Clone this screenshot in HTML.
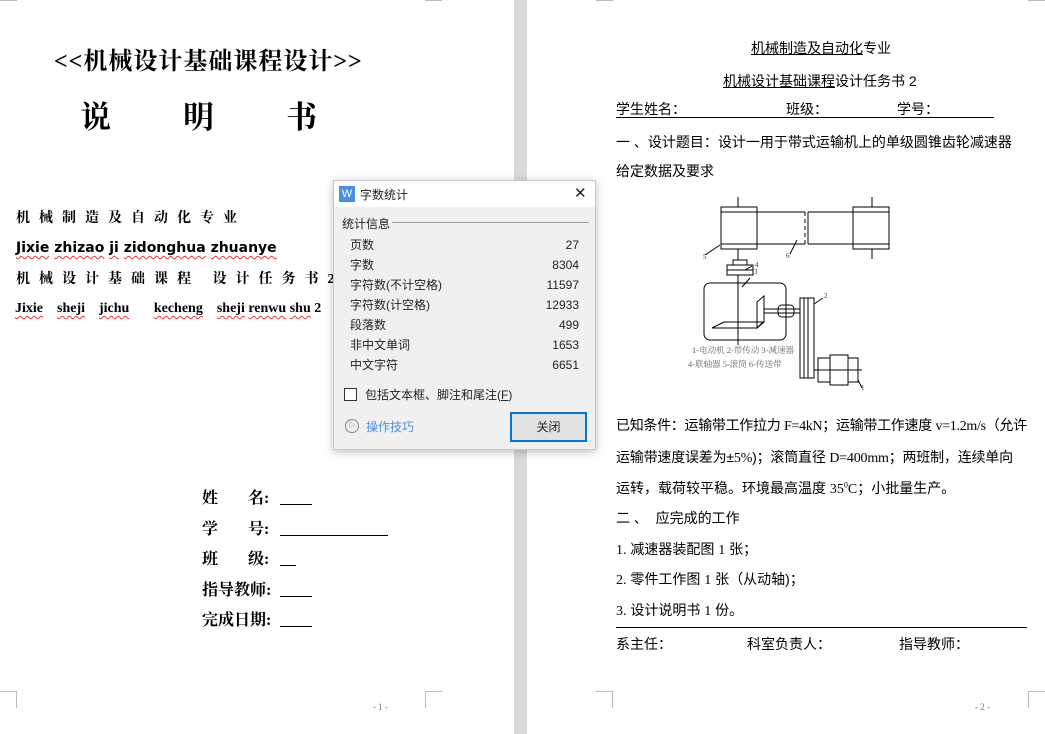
<!DOCTYPE html>
<html><head><meta charset="utf-8"><style>
*{margin:0;padding:0;box-sizing:border-box}
body{width:1045px;height:734px;overflow:hidden;background:#fff;position:relative;font-family:"Liberation Sans","Noto Sans CJK SC",sans-serif;color:#000}
.a{position:absolute;white-space:nowrap}
.s{font-family:"Liberation Serif","Noto Serif CJK SC",serif}
.w{text-decoration:underline wavy #e33 1px;text-underline-offset:3px}
.r{font-size:14px;line-height:18px}
.c{position:absolute;border-color:#bbb;border-style:solid;width:17px;height:17px}
.lb{display:inline-block;width:78px}
</style></head><body>
<div class="a" style="left:514px;top:0;width:13px;height:734px;background:#d8d9db"></div>

<div class="a s" style="left:54px;top:41px;font-size:24px;font-weight:bold;letter-spacing:1px">&lt;&lt;机械设计基础课程设计&gt;&gt;</div>
<div class="a s" style="left:80px;top:92px;font-size:31px;font-weight:bold">说<span style="display:inline-block;width:72px"></span>明<span style="display:inline-block;width:72px"></span>书</div>
<div class="a s" style="left:16px;top:207px;font-size:14px;font-weight:bold;letter-spacing:9px">机械制造及自动化专业</div>
<div class="a" style="left:16px;top:240px;font-size:14px;font-weight:bold;font-family:'DejaVu Sans',sans-serif"><span class="w">Jixie</span> <span class="w">zhizao</span> <span class="w">ji</span> <span class="w">zidonghua</span> <span class="w">zhuanye</span></div>
<div class="a s" style="left:16px;top:268px;font-size:14px;font-weight:bold;letter-spacing:9px">机械设计基础课程 设计任务书2</div>
<div class="a s" style="left:15px;top:301px;font-size:14px;font-weight:bold"><span class="w">Jixie</span>&nbsp;&nbsp;&nbsp; <span class="w">sheji</span>&nbsp;&nbsp;&nbsp; <span class="w">jichu</span>&nbsp;&nbsp;&nbsp;&nbsp;&nbsp;&nbsp; <span class="w">kecheng</span>&nbsp;&nbsp;&nbsp; <span class="w">sheji</span> <span class="w">renwu</span> <span class="w">shu</span> 2</div>
<div class="a s" style="left:202px;top:484px;font-size:16px;font-weight:bold;line-height:30.5px">
<span class="lb">姓<span style="display:inline-block;width:30px"></span>名:</span><u>&nbsp;&nbsp;&nbsp;&nbsp;&nbsp;&nbsp;&nbsp;&nbsp;</u><br>
<span class="lb">学<span style="display:inline-block;width:30px"></span>号:</span><u>&nbsp;&nbsp;&nbsp;&nbsp;&nbsp;&nbsp;&nbsp;&nbsp;&nbsp;&nbsp;&nbsp;&nbsp;&nbsp;&nbsp;&nbsp;&nbsp;&nbsp;&nbsp;&nbsp;&nbsp;&nbsp;&nbsp;&nbsp;&nbsp;&nbsp;&nbsp;&nbsp;</u><br>
<span class="lb">班<span style="display:inline-block;width:30px"></span>级:</span><u>&nbsp;&nbsp;&nbsp;&nbsp;</u><br>
<span class="lb">指导教师:</span><u>&nbsp;&nbsp;&nbsp;&nbsp;&nbsp;&nbsp;&nbsp;&nbsp;</u><br>
<span class="lb">完成日期:</span><u>&nbsp;&nbsp;&nbsp;&nbsp;&nbsp;&nbsp;&nbsp;&nbsp;</u></div>
<div class="a s" style="left:373px;top:702px;font-size:9px;color:#777">- 1 -</div>
<div class="c" style="left:425px;top:691px;border-width:1px 0 0 1px"></div>
<div class="c" style="left:0;top:-16px;border-width:0 1px 1px 0"></div>
<div class="c" style="left:425px;top:-16px;border-width:0 0 1px 1px"></div>
<div class="c" style="left:0;top:691px;border-width:1px 1px 0 0"></div>

<div class="c" style="left:596px;top:691px;border-width:1px 1px 0 0"></div>
<div class="c" style="left:1028px;top:691px;border-width:1px 0 0 1px"></div>
<div class="c" style="left:596px;top:-16px;border-width:0 1px 1px 0"></div>
<div class="c" style="left:1028px;top:-16px;border-width:0 0 1px 1px"></div>
<div class="a r" style="left:751px;top:39px"><u>机械制造及自动化</u>专业</div>
<div class="a r" style="left:723px;top:72px"><u>机械设计基础课程</u>设计任务书 2</div>
<div class="a r" style="left:616px;top:100px">学生姓名：</div>
<div class="a r" style="left:786px;top:100px">班级：</div>
<div class="a r" style="left:897px;top:100px">学号：</div>
<div class="a" style="left:616px;top:117px;width:378px;border-top:1px solid #000"></div>
<div class="a r" style="left:616px;top:133px">一 、设计题目：设计一用于带式运输机上的单级圆锥齿轮减速器</div>
<div class="a r" style="left:616px;top:162px">给定数据及要求</div>
<svg class="a" style="left:680px;top:190px" width="220" height="200" viewBox="680 190 220 200" fill="none" stroke="#000" stroke-width="1">
<rect x="721" y="207" width="36" height="42"/><line x1="721" y1="212" x2="757" y2="212"/><line x1="721" y1="244" x2="757" y2="244"/>
<line x1="757" y1="212" x2="805" y2="212"/><line x1="757" y1="244" x2="805" y2="244"/>
<line x1="805" y1="212" x2="805" y2="244" stroke-dasharray="4,3"/><line x1="808" y1="212" x2="808" y2="244"/>
<line x1="808" y1="212" x2="853" y2="212"/><line x1="808" y1="244" x2="853" y2="244"/>
<rect x="853" y="207" width="36" height="42"/><line x1="853" y1="212" x2="889" y2="212"/><line x1="853" y1="244" x2="889" y2="244"/>
<line x1="738" y1="197" x2="738" y2="207"/><line x1="872" y1="197" x2="872" y2="207"/><line x1="872" y1="249" x2="872" y2="259"/>
<line x1="738" y1="249" x2="738" y2="260"/>
<rect x="733" y="260" width="14" height="5"/><rect x="727" y="265" width="26" height="10"/><line x1="727" y1="270" x2="753" y2="270"/>
<rect x="704" y="283" width="82" height="57" rx="6"/>
<line x1="738" y1="275" x2="738" y2="345"/>
<path d="M712 328 L724 322 L763 322 L757 328 Z"/><path d="M757 302 L764 296 L764 322 L757 328 Z"/>
<line x1="764" y1="309" x2="800" y2="309"/><line x1="764" y1="313" x2="800" y2="313"/>
<rect x="778" y="305" width="16" height="12" rx="4"/>
<rect x="800" y="298" width="14" height="80"/><line x1="804" y1="298" x2="804" y2="378"/><line x1="808" y1="298" x2="808" y2="378"/>
<rect x="818" y="358" width="12" height="24"/><rect x="830" y="355" width="18" height="30"/><rect x="848" y="358" width="10" height="24"/>
<line x1="814" y1="370" x2="862" y2="370"/>
<line x1="705" y1="255" x2="720" y2="245"/><line x1="790" y1="254" x2="797" y2="240"/><line x1="814" y1="304" x2="823" y2="298"/><line x1="745" y1="270" x2="752" y2="266"/><line x1="742" y1="287" x2="750" y2="278"/><line x1="858" y1="380" x2="862" y2="388"/>
<g fill="#333" stroke="none" font-size="7" font-family="Liberation Serif, Noto Serif CJK SC, serif"><text x="703" y="259">5</text><text x="786" y="258">6</text><text x="755" y="267">4</text><text x="754" y="274">3</text><text x="824" y="298">2</text><text x="861" y="390">1</text>
<text x="692" y="353" fill="#666" font-size="8.5">1-电动机 2-带传动 3-减速器</text><text x="688" y="367" fill="#666" font-size="8.5">4-联轴器 5-滚筒 6-传送带</text></g>
</svg>
<div class="a r" style="left:616px;top:416px;letter-spacing:-0.3px">已知条件：运输带工作拉力 <span class="s">F=4kN</span>；运输带工作速度 <span class="s">v=1.2m/s</span>（允许</div>
<div class="a r" style="left:616px;top:448px;letter-spacing:-0.2px">运输带速度误差为±<span class="s">5%</span>)；滚筒直径 <span class="s">D=400mm</span>；两班制，连续单向</div>
<div class="a r" style="left:616px;top:479px">运转，载荷较平稳。环境最高温度 <span class="s">35<sup style="font-size:8px;line-height:0">0</sup>C</span>；小批量生产。</div>
<div class="a r" style="left:616px;top:509px">二 、&nbsp;&nbsp;应完成的工作</div>
<div class="a r" style="left:616px;top:540px"><span class="s">1.</span> 减速器装配图 <span class="s">1</span> 张；</div>
<div class="a r" style="left:616px;top:570px"><span class="s">2.</span> 零件工作图 <span class="s">1</span> 张（从动轴)；</div>
<div class="a r" style="left:616px;top:601px"><span class="s">3.</span> 设计说明书 <span class="s">1</span> 份。</div>
<div class="a" style="left:616px;top:627px;width:411px;border-top:1px solid #000"></div>
<div class="a r" style="left:616px;top:635px">系主任：</div>
<div class="a r" style="left:747px;top:635px">科室负责人：</div>
<div class="a r" style="left:899px;top:635px">指导教师：</div>
<div class="a s" style="left:975px;top:702px;font-size:9px;color:#777">- 2 -</div>

<div class="a" style="left:333px;top:180px;width:263px;height:270px;background:#f0f0f0;border:1px solid #c8c8c8;box-shadow:0 2px 8px rgba(0,0,0,.25);font-size:12px;color:#222">
 <div style="height:26px;background:#fff;position:relative">
  <div class="a" style="left:5px;top:5px;width:16px;height:16px;background:#4a90e2;color:#fff;font-size:11px;text-align:center;line-height:16px">W</div>
  <div class="a" style="left:26px;top:5px">字数统计</div>
  <div class="a" style="left:240px;top:3px;font-size:15px;font-weight:300">✕</div>
 </div>
 <div class="a" style="left:8px;top:34px">统计信息</div>
 <div class="a" style="left:58px;top:41px;width:197px;border-top:1px solid #999"></div>
 <div class="a" style="left:16px;top:54px;width:229px;line-height:20px">
  <div style="display:flex;justify-content:space-between"><span>页数</span><span>27</span></div>
  <div style="display:flex;justify-content:space-between"><span>字数</span><span>8304</span></div>
  <div style="display:flex;justify-content:space-between"><span>字符数(不计空格)</span><span>11597</span></div>
  <div style="display:flex;justify-content:space-between"><span>字符数(计空格)</span><span>12933</span></div>
  <div style="display:flex;justify-content:space-between"><span>段落数</span><span>499</span></div>
  <div style="display:flex;justify-content:space-between"><span>非中文单词</span><span>1653</span></div>
  <div style="display:flex;justify-content:space-between"><span>中文字符</span><span>6651</span></div>
 </div>
 <div class="a" style="left:10px;top:207px;width:13px;height:13px;border:1px solid #333;background:#fff"></div>
 <div class="a" style="left:31px;top:205px">包括文本框、脚注和尾注(<u>F</u>)</div>
 <div class="a" style="left:11px;top:238px;width:14px;height:14px;border:1px solid #888;border-radius:50%;font-size:7px;color:#777;text-align:center;line-height:12px">▷</div>
 <div class="a" style="left:32px;top:237px;color:#4a90e2">操作技巧</div>
 <div class="a" style="left:176px;top:231px;width:77px;height:30px;border:2px solid #0078d7;background:#e1e1e1;text-align:center;line-height:26px">关闭</div>
</div>
</body></html>
